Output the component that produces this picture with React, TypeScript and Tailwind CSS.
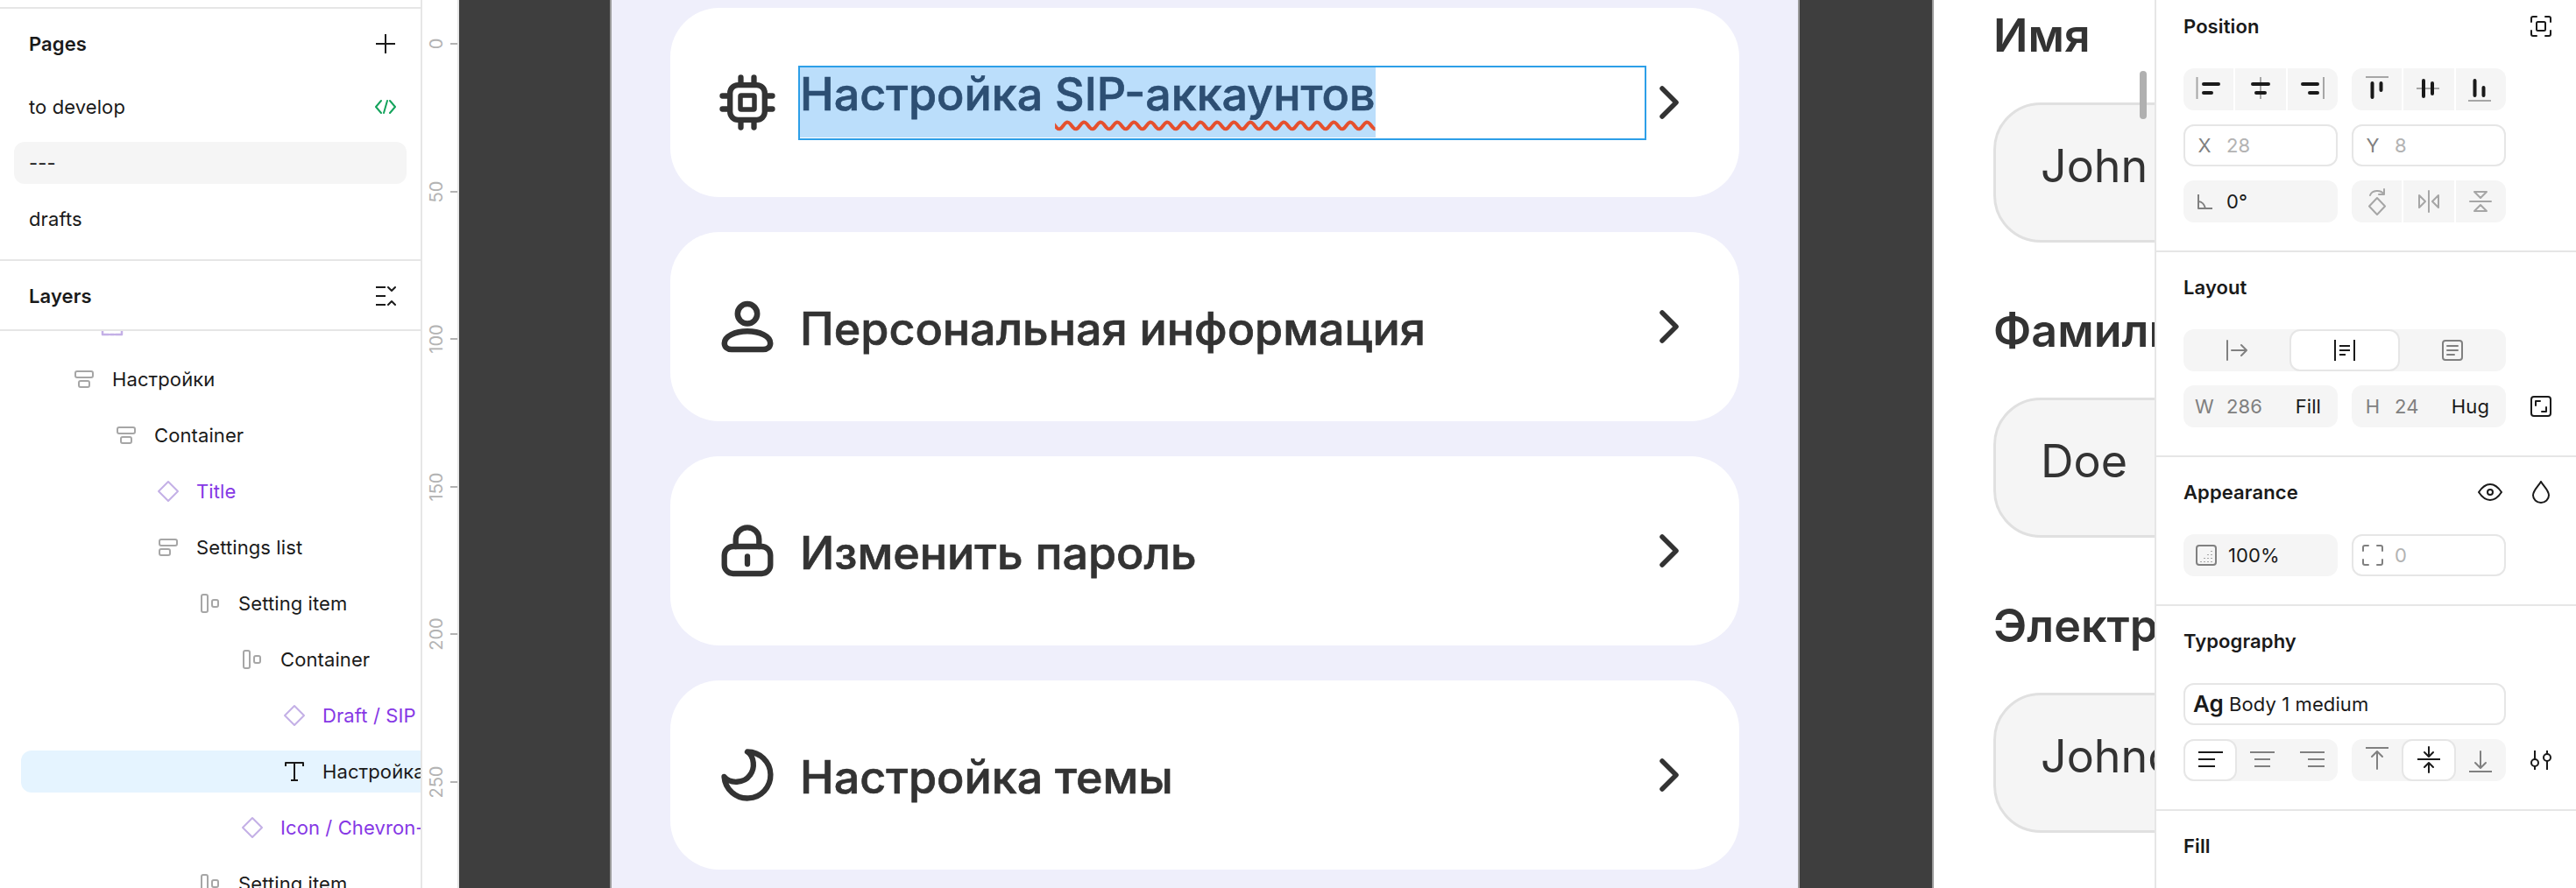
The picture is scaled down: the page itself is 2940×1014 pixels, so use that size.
import React from "react";

const P = ({ c = "#1a1a1a", w = 2, children, s = 24, vb = 24, cls = "" }: any) => (
  <svg width={s} height={s} viewBox={`0 0 ${vb} ${vb}`} fill="none" stroke={c} strokeWidth={w} strokeLinecap="round" strokeLinejoin="round" className={`shrink-0 ${cls}`}>
    {children}
  </svg>
);

const Chip = () => (
  <P c="#333" w={6.3} s={72} vb={72}>
    <rect x="16.2" y="16.2" width="39.6" height="39.6" rx="9" />
    <rect x="28" y="28" width="16" height="16" rx="1" strokeWidth="5.5" />
    <path d="M28.5 7.5V13M43.5 7.5V13M28.5 59V64.5M43.5 59V64.5M7.5 28.5H13M7.5 43.5H13M59 28.5H64.5M59 43.5H64.5" />
  </P>
);
const User = () => (
  <P c="#333" w={6.5} s={72} vb={72}>
    <circle cx="36" cy="21.3" r="11.2" />
    <path d="M18 62H54C59 62 62.2 59 62.2 55C62.2 47 50 41.3 36 41.3C22 41.3 9.8 47 9.8 55C9.8 59 13 62 18 62Z" />
  </P>
);
const Lock = () => (
  <P c="#333" w={6.3} s={72} vb={72}>
    <rect x="9.7" y="31" width="52.6" height="31" rx="10" />
    <path d="M22.7 31V22.7a13.3 13.3 0 0 1 26.6 0V31" />
    <path d="M36 42.5V51" />
  </P>
);
const Moon = () => (
  <P c="#333" w={6.3} s={72} vb={72}>
    <path d="M36 9.5A26.500 26.500 0 1 1 9.500 38C16 46 32 46 39 36C45 28 44 15 36 9.500Z" />
  </P>
);
const Chevron = () => (
  <P c="#333" w={5.5} s={48} vb={48}>
    <path d="M16 8l16 16-16 16" />
  </P>
);

const Card = ({ icon, label, selected }: { icon: React.ReactNode; label: string; selected?: boolean }) => (
  <div className="flex h-[216px] items-center rounded-[56px] bg-white pl-[52px] pr-[56px]">
    {icon}
    <div className={`ml-[22px] mr-[2px] flex h-[85px] flex-1 items-start border-[2.5px] ${selected ? "border-[#2d9fe8]" : "border-transparent"}`}>
      {selected ? (
        <div className="h-[80px] whitespace-nowrap bg-[#bbdefb] text-[52px] font-medium leading-[62px] text-[#2d4f73] [-webkit-text-stroke:0.7px_#2d4f73]">
          Настройка{" "}
          <span className="underline decoration-[#e5502e] decoration-wavy decoration-[4px] underline-offset-[12px] [text-decoration-skip-ink:none]">SIP-аккаунтов</span>
        </div>
      ) : (
        <div className="text-[52px] font-medium leading-[85px] text-[#333] [-webkit-text-stroke:0.7px_#333]">{label}</div>
      )}
    </div>
    <Chevron />
  </div>
);

const Field = ({ label, value }: { label: string; value: string }) => (
  <div className="flex flex-col gap-[36px]">
    <div className="whitespace-nowrap text-[52px] font-semibold leading-[81px] text-[#333]">{label}</div>
    <div className="flex h-[160px] w-[600px] items-center rounded-[54px] border-[3px] border-[#e0e0e0] bg-[#f5f5f5] pb-[14px] pl-[51px] text-[52px] text-[#333]">{value}</div>
  </div>
);

const iconLayer = {
  frame: <P c="#c4b0e6" w={2.5} s={32} vb={32}><path d="M5 24v5h7M27 24v5h-7M14 29h4" /></P>,
  col: <P c="#a6a6a6" w={2} s={32} vb={32}><rect x="6" y="7" width="20" height="7" rx="2" /><rect x="10" y="18" width="12" height="7" rx="2" /></P>,
  left: <P c="#a6a6a6" w={2} s={32} vb={32}><rect x="6" y="7" width="20" height="7" rx="2" /><rect x="6" y="18" width="12" height="7" rx="2" /></P>,
  row: <P c="#a6a6a6" w={2} s={32} vb={32}><rect x="6" y="6" width="7" height="20" rx="2" /><rect x="18" y="12" width="7" height="8" rx="2" /></P>,
  comp: <P c="#c4b0e6" w={2} s={32} vb={32}><path d="M16 5l11 11-11 11L5 16Z" /></P>,
  text: <P c="#1a1a1a" w={2} s={32} vb={32}><path d="M6 10V6h20v4M16 6v20M12 26h8" strokeLinecap="butt" /></P>,
};

const layers = [
  { pad: "pl-[80px]", icon: iconLayer.col, label: "Настройки" },
  { pad: "pl-[128px]", icon: iconLayer.col, label: "Container" },
  { pad: "pl-[176px]", icon: iconLayer.comp, label: "Title", purple: true },
  { pad: "pl-[176px]", icon: iconLayer.left, label: "Settings list" },
  { pad: "pl-[224px]", icon: iconLayer.row, label: "Setting item" },
  { pad: "pl-[272px]", icon: iconLayer.row, label: "Container" },
  { pad: "pl-[320px]", icon: iconLayer.comp, label: "Draft / SIP accounts", purple: true },
  { pad: "pl-[296px]", icon: iconLayer.text, label: "Настройка SIP-аккаунтов", selected: true },
  { pad: "pl-[272px]", icon: iconLayer.comp, label: "Icon / Chevron-right", purple: true },
  { pad: "pl-[224px]", icon: iconLayer.row, label: "Setting item" },
];

const D = "#1a1a1a";
const G = "#808080";
const L = "#a6a6a6";

const Group = ({ children }: any) => (
  <div className="flex h-[48px] w-[176px] shrink-0 gap-[2px] overflow-hidden rounded-[12px]">{children}</div>
);
const Cell = ({ children }: any) => <div className="flex flex-1 items-center justify-center bg-[#f5f5f5]">{children}</div>;

const Solid = ({ children, cols = "w-[176px]" }: any) => (
  <div className={`flex h-[48px] ${cols} shrink-0 items-center rounded-[12px] bg-[#f5f5f5]`}>{children}</div>
);
const Seg = ({ children, on }: any) => (
  <div className={`flex h-full flex-1 items-center justify-center rounded-[12px] ${on ? "border-2 border-[#e6e6e6] bg-white" : ""}`}>{children}</div>
);
const Boxed = ({ children, cols = "w-[176px]" }: any) => (
  <div className={`flex h-[48px] ${cols} shrink-0 items-center rounded-[12px] border-2 border-[#e6e6e6] bg-white`}>{children}</div>
);
const Lbl = ({ children, off }: any) => (
  <span className={`flex w-[32px] shrink-0 justify-center ${off ? "ml-[6px]" : "ml-[8px]"} text-[#808080]`}>{children}</span>
);
const Val = ({ children, c }: any) => <span className={`ml-[9px] ${c}`}>{children}</span>;

const Row = ({ children }: any) => <div className="flex items-center gap-[16px]">{children}</div>;

const Section = ({ title, right, children, h, top = "pt-[16px]", last }: any) => (
  <section className={`flex ${h} shrink-0 flex-col ${last ? "" : "border-b-2 border-[#e6e6e6]"} ${top} pl-[31px] pr-[28px]`}>
    <div className="flex h-[48px] shrink-0 items-center justify-between font-semibold">
      <span>{title}</span>
      {right}
    </div>
    {children && <div className="mt-[24px] flex flex-col gap-[16px]">{children}</div>}
  </section>
);

const I32 = ({ children }: any) => <P s={32} vb={32} c={D} w={4}>{children}</P>;
const Ln = ({ d }: { d: string }) => <path d={d} stroke={L} strokeWidth="2" strokeLinecap="butt" />;

export default function App() {
  return (
    <div className="flex h-[1014px] w-[2940px] overflow-hidden bg-white font-['Inter',sans-serif]">
      {/* left */}
      <aside className="flex h-full w-[482px] shrink-0 flex-col border-r-2 border-[#e6e6e6] text-[22px] tracking-[0.1px] text-[#1a1a1a]">
        <div className="h-[10px] shrink-0 border-b-2 border-[#e6e6e6]" />
        <div className="flex h-[288px] shrink-0 flex-col border-b-2 border-[#e6e6e6]">
          <div className="flex h-[80px] shrink-0 items-center justify-between pl-[33px] pr-[28px] font-semibold">
            <span>Pages</span>
            <P s={24} w={2} c={D}><path d="M12 1v22M1 12h22" strokeLinecap="butt" /></P>
          </div>
          <div className="mt-[8px] flex h-[48px] shrink-0 items-center justify-between pl-[33px] pr-[28px]">
            <span>to develop</span>
            <P s={24} w={2} c="#14a35c"><path d="M7 5l-6 7 6 7M17 5l6 7-6 7M14 5l-4 14" /></P>
          </div>
          <div className="mx-[16px] mt-[16px] flex h-[48px] shrink-0 items-center rounded-[12px] bg-[#f5f5f5] pl-[17px]">---</div>
          <div className="mt-[16px] flex h-[48px] shrink-0 items-center pl-[33px]">drafts</div>
        </div>
        <div className="flex h-[80px] shrink-0 items-center justify-between border-b-2 border-[#e6e6e6] pl-[33px] pr-[28px] pt-[2px] font-semibold">
          <span>Layers</span>
          <P s={24} w={2} c={D}>
            <path d="M1 2h11M1 12h11M1 22h11" strokeLinecap="butt" />
            <path d="M15 2l4 4 4-4M15 22l4-4 4 4" />
          </P>
        </div>
        <div className="flex min-h-0 flex-1 flex-col gap-[16px] overflow-hidden">
          <div className="-mt-[33px] flex h-[48px] shrink-0 items-center pl-[112px]">{iconLayer.frame}</div>
          {layers.map((r, i) => (
            <div key={i} className={`flex h-[48px] shrink-0 items-center gap-[16px] whitespace-nowrap ${r.selected ? "ml-[24px] rounded-l-[12px] bg-[#e5f4ff]" : ""} ${r.pad} ${r.purple ? "text-[#8638e5]" : ""}`}>
              {r.icon}
              <span>{r.label}</span>
            </div>
          ))}
        </div>
      </aside>

      {/* ruler */}
      <div className="flex h-full w-[42px] shrink-0 flex-col border-r-2 border-[#e6e6e6] pt-[42px]">
        {[0, 50, 100, 150, 200, 250].map((n) => (
          <div key={n} className="flex h-[168.5px] shrink-0 items-start">
            <div className="flex h-[16px] w-[32px] items-center justify-center">
              <span className="-rotate-90 text-[20px] leading-none text-[#b3b3b3]">{n}</span>
            </div>
            <div className="mt-[7px] h-[2px] w-[8px] bg-[#b3b3b3]" />
          </div>
        ))}
      </div>

      {/* canvas */}
      <main className="flex min-w-0 flex-1">
        <div className="h-full w-[174px] shrink-0 border-r-2 border-[#9a9a9a] bg-[#3e3e3e]" />
        <div className="flex h-full w-[1354px] shrink-0 flex-col gap-[40px] bg-[#efeffb] px-[67px] pt-[9px]">
          <Card selected icon={<Chip />} label="Настройка SIP-аккаунтов" />
          <Card icon={<User />} label="Персональная информация" />
          <Card icon={<Lock />} label="Изменить пароль" />
          <Card icon={<Moon />} label="Настройка темы" />
        </div>
        <div className="h-full w-[155px] shrink-0 border-x-2 border-[#9a9a9a] bg-[#3e3e3e]" />
        <div className="relative h-full w-[254px] shrink-0 overflow-hidden border-r-2 border-[#e6e6e6] bg-white">
          <div className="flex flex-col gap-[60px] pl-[68px]">
            <Field label="Имя" value="John" />
            <Field label="Фамилия" value="Doe" />
            <Field label="Электронная почта" value="Johndoe" />
          </div>
          <div className="absolute left-[235px] top-[81px] h-[55px] w-[8px] rounded-full bg-[#b0b0b0]" />
        </div>

        {/* right */}
        <aside className="flex h-full min-w-0 flex-1 flex-col text-[22px] tracking-[0.1px] text-[#1a1a1a]">
          <Section title="Position" h="h-[288px]" top="pt-[6px]" right={
            <P s={24} w={2}><path d="M1 7V3a2 2 0 0 1 2-2h4M17 1h4a2 2 0 0 1 2 2v4M23 17v4a2 2 0 0 1-2 2h-4M7 23H3a2 2 0 0 1-2-2v-4" /><rect x="7" y="7" width="10" height="10" rx="1.5" /></P>
          }>
            <Row>
              <Group>
                <Cell><I32><Ln d="M2.5 2V27" /><path d="M10 10H27M10 20H19" /></I32></Cell>
                <Cell><I32><Ln d="M16 2V27" /><path d="M7 10H25M11 20H21" /></I32></Cell>
                <Cell><I32><Ln d="M29 2V27" /><path d="M5 10H22M13 20H22" /></I32></Cell>
              </Group>
              <Group>
                <Cell><I32><Ln d="M3 2H29" /><path d="M10.5 9V25M20.5 9V17" /></I32></Cell>
                <Cell><I32><Ln d="M2 15H28" /><path d="M10 6V24M20 9V21" /></I32></Cell>
                <Cell><I32><Ln d="M2 29H28" /><path d="M9.5 6V23M19.5 14V23" /></I32></Cell>
              </Group>
            </Row>
            <Row>
              <Boxed><Lbl off>X</Lbl><Val c="text-[#b3b3b3]">28</Val></Boxed>
              <Boxed><Lbl off>Y</Lbl><Val c="text-[#b3b3b3]">8</Val></Boxed>
            </Row>
            <Row>
              <Solid>
                <span className="ml-[12px] flex w-[24px] shrink-0 justify-center"><P s={24} w={2} c={G}><path d="M5 4V20H21M5 12c4 0 7 4 8 8" strokeLinecap="butt" /></P></span>
                <span className="ml-[13px]">0°</span>
              </Solid>
              <Group>
                <Cell><P s={32} vb={32} w={2} c={L}><path d="M16 12l9 9.5-9 9.5-9-9.5Z" /><path d="M8 9C10 3 20 2 24 8M24 2v6h-6" /></P></Cell>
                <Cell><P s={32} vb={32} w={2} c={L}><path d="M16 4V28M5 9l7 7-7 7ZM27 9l-7 7 7 7Z" /></P></Cell>
                <Cell><P s={32} vb={32} w={2} c={L}><path d="M4 16H28M9 5H23L16 12ZM9 27H23L16 20Z" /></P></Cell>
              </Group>
            </Row>
          </Section>

          <Section title="Layout" h="h-[234px]">
            <Solid cols="w-[368px]">
              <Seg><P c={G}><path d="M1 1V23M6 12H23M17 6l6 6-6 6" /></P></Seg>
              <Seg on><P c={D}><path d="M1 0V24M23 0V24M6 7H18M6 12H18M6 17H13" strokeLinecap="butt" /></P></Seg>
              <Seg><P c={G}><rect x="1" y="1" width="22" height="22" rx="3" /><path d="M6 7H18M6 12H18M6 17H14" /></P></Seg>
            </Solid>
            <div className="flex items-center justify-between">
              <Row>
                <Solid><Lbl>W</Lbl><Val c="text-[#808080]">286</Val><span className="ml-auto mr-[19px]">Fill</span></Solid>
                <Solid><Lbl>H</Lbl><Val c="text-[#808080]">24</Val><span className="ml-auto mr-[19px]">Hug</span></Solid>
              </Row>
              <P><rect x="1" y="1" width="22" height="22" rx="3" /><path d="M6 11V6H11M18 13V18H13" /></P>
            </div>
          </Section>

          <Section title="Appearance" h="h-[170px]" right={
            <div className="flex items-center gap-[32px]">
              <svg width="28" height="20" viewBox="0 0 28 20" fill="none" stroke={D} strokeWidth="2" className="shrink-0">
                <path d="M1 10C5 4 9 1 14 1s9 3 13 9c-4 6-8 9-13 9S5 16 1 10Z" />
                <circle cx="14" cy="10" r="3" />
              </svg>
              <svg width="24" height="26" viewBox="0 0 24 26" fill="none" stroke={D} strokeWidth="2" className="shrink-0">
                <path d="M12 1C9 6 3 11 3 16.500a9 8.500 0 0 0 18 0C21 11 15 6 12 1Z" />
              </svg>
            </div>
          }>
            <Row>
              <Solid>
                <span className="ml-[14px] flex w-[24px] shrink-0">
                  <svg width="24" height="24" viewBox="0 0 24 24" fill="none" className="shrink-0">
                    <rect x="1" y="1" width="22" height="22" rx="3" stroke={G} strokeWidth="2" />
                    <path d="M18 7v1M14 11v1M18 11v1M10 15v1M14 15v1M18 15v1M6 19v1M10 19v1M14 19v1M18 19v1" stroke={L} strokeWidth="2" />
                  </svg>
                </span>
                <span className="ml-[13px]">100%</span>
              </Solid>
              <Boxed>
                <span className="ml-[10px] flex w-[24px] shrink-0">
                  <P c={G}><path d="M1 7V3a2 2 0 0 1 2-2h4M17 1h4a2 2 0 0 1 2 2v4M23 17v4a2 2 0 0 1-2 2h-4M7 23H3a2 2 0 0 1-2-2v-4" /></P>
                </span>
                <span className="ml-[13px] text-[#b3b3b3]">0</span>
              </Boxed>
            </Row>
          </Section>

          <Section title="Typography" h="h-[234px]">
            <Boxed cols="w-[368px]">
              <span className="ml-[9px] text-[26px] font-semibold leading-none">Ag</span>
              <span className="ml-[6px]">Body 1 medium</span>
            </Boxed>
            <div className="flex items-center justify-between">
              <Row>
                <Solid>
                  <Seg on><P s={32} vb={32} c={D} w={2}><path d="M2 7H30M2 15H21M2 23H21" strokeLinecap="butt" /></P></Seg>
                  <Seg><P s={32} vb={32} c={G} w={2}><path d="M2 7H30M7 15H25M7 23H25" strokeLinecap="butt" /></P></Seg>
                  <Seg><P s={32} vb={32} c={G} w={2}><path d="M2 7H30M11 15H30M11 23H30" strokeLinecap="butt" /></P></Seg>
                </Solid>
                <Solid>
                  <Seg><P s={32} vb={32} c={G} w={2}><path d="M3 2H29" strokeLinecap="butt" /><path d="M16 26V7M10 12l6-6 6 6" /></P></Seg>
                  <Seg on><P s={32} vb={32} c={D} w={2}><path d="M3 15H29" strokeLinecap="butt" /><path d="M16 1V11M11 7l5 5 5-5M16 30V20M11 24l5-5 5 5" /></P></Seg>
                  <Seg><P s={32} vb={32} c={G} w={2}><path d="M3 29H29" strokeLinecap="butt" /><path d="M16 6V25M10 19l6 6 6-6" /></P></Seg>
                </Solid>
              </Row>
              <P c={D} w={2}>
                <circle cx="5" cy="15" r="4" /><circle cx="19" cy="9" r="4" />
                <path d="M5 1V11M5 19V23M19 1V5M19 13V23" strokeLinecap="butt" />
              </P>
            </div>
          </Section>

          <Section title="Fill" h="h-[88px]" last />
        </aside>
      </main>
    </div>
  );
}
